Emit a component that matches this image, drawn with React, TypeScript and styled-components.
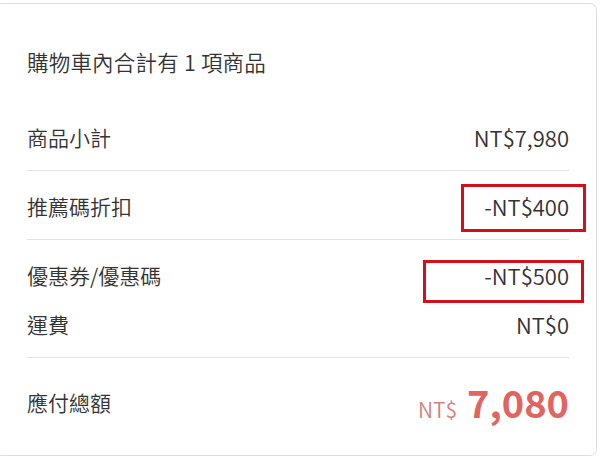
import React from "react";
import styled, { createGlobalStyle } from "styled-components";

const GlobalStyle = createGlobalStyle`
  html, body {
    margin: 0;
    padding: 0;
    background: #fff;
    overflow: hidden;
  }
  body {
    font-family: "Noto Sans CJK TC", "Noto Sans", sans-serif;
    color: #333;
  }
`;

type Line = { label: string; value: string };

const groups: Line[][] = [
  [{ label: "商品小計", value: "NT$7,980" }],
  [{ label: "推薦碼折扣", value: "-NT$400" }],
  [
    { label: "優惠券/優惠碼", value: "-NT$500" },
    { label: "運費", value: "NT$0" },
  ],
];

const marks = [
  { left: 466, top: 180, width: 125, height: 48 },
  { left: 428, top: 256, width: 161, height: 43 },
];

export default function App() {
  return (
    <>
      <GlobalStyle />
      <Card>
        <Title>購物車內合計有 1 項商品</Title>
        {groups.map((group, i) => (
          <Section key={i}>
            {group.map((line) => (
              <Row key={line.label}>
                <Label>{line.label}</Label>
                <Value>{line.value}</Value>
              </Row>
            ))}
          </Section>
        ))}
        <TotalSection>
          <Label>應付總額</Label>
          <Total>
            <Currency>NT$</Currency>
            <Amount>7,080</Amount>
          </Total>
        </TotalSection>
        {marks.map((m, i) => (
          <Highlight
            key={i}
            style={{ left: m.left, top: m.top, width: m.width, height: m.height }}
          />
        ))}
      </Card>
    </>
  );
}

const Card = styled.div`
  position: relative;
  box-sizing: border-box;
  width: 603px;
  height: 453px;
  margin: 3px 0 0 -6px;
  padding: 0 27px 0 32px;
  border: 1px solid #dedede;
  border-radius: 7px;
  background: #fff;
`;

const Title = styled.div`
  padding: 43px 0 25px;
  font-size: 21.5px;
  font-weight: 350;
  line-height: 30px;
  letter-spacing: 0.2px;
  color: #333;
`;

const Section = styled.div`
  display: flex;
  flex-direction: column;
  gap: 19px;
  padding: 20px 0 18px;
  border-bottom: 1px solid #e3e3e3;
`;

const Row = styled.div`
  display: flex;
  justify-content: space-between;
  align-items: center;
  height: 30px;
`;

const Label = styled.span`
  font-size: 21px;
  font-weight: 350;
  line-height: 30px;
  color: #333;
`;

const Value = styled.span`
  font-size: 22px;
  font-weight: 350;
  line-height: 30px;
  color: #333;
`;

const TotalSection = styled.div`
  display: flex;
  justify-content: space-between;
  align-items: center;
  height: 50px;
  padding-top: 19px;
`;

const Total = styled.div`
  display: flex;
  align-items: baseline;
  gap: 10px;
`;

const Currency = styled.span`
  font-size: 21px;
  font-weight: 350;
  color: #d5817e;
`;

const Amount = styled.span`
  font-size: 38px;
  font-weight: 700;
  line-height: 50px;
  color: #e0645f;
`;

const Highlight = styled.div`
  position: absolute;
  box-sizing: border-box;
  border: 3px solid #d40f1c;
  pointer-events: none;
`;
